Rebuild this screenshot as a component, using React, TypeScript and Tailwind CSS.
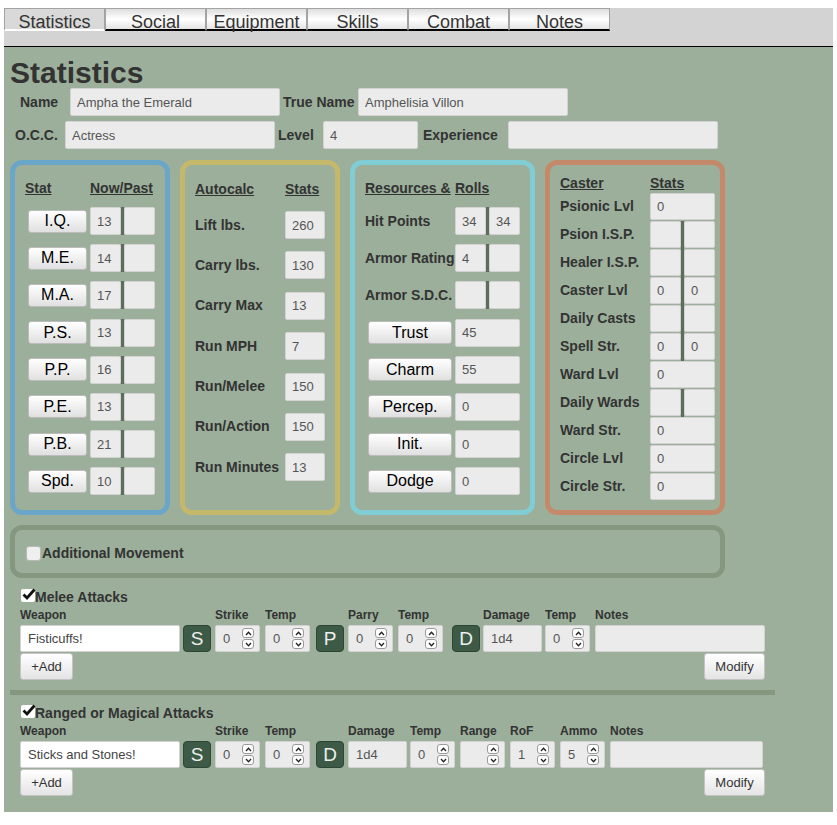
import React from 'react';

/**
 * Character sheet - Statistics tab
 */

const tabs = ['Statistics', 'Social', 'Equipment', 'Skills', 'Combat', 'Notes'];

function Field({ value = '', className = '' }: { value?: string; className?: string }) {
    return (
        <input
            readOnly
            value={value}
            className={`rounded-[2px] border border-[#d3d3d3] bg-[#ebebeb] px-[6px] text-[13px] text-[#555] outline-none ${className}`}
        />
    );
}

function Pair({ a = '', b = '', h = 'h-[28px]' }: { a?: string; b?: string; h?: string }) {
    return (
        <div className="flex items-start">
            <Field value={a} className={`w-[31px] ${h}`} />
            <div className="w-[3px] self-stretch bg-[#5d6c5c]" />
            <Field value={b} className={`w-[31px] ${h}`} />
        </div>
    );
}

function Btn({ children, className = '' }: { children: React.ReactNode; className?: string }) {
    return (
        <button className={`flex h-[23px] items-center justify-center rounded-[3px] border border-[#bcbcbc] bg-linear-to-b from-white to-[#e0e0e0] text-[16px] leading-none text-black ${className}`}>
            {children}
        </button>
    );
}

function Label({ children, className = '' }: { children: React.ReactNode; className?: string }) {
    return <span className={`shrink-0 text-[14px] font-bold text-[#333] ${className}`}>{children}</span>;
}

function Spin() {
    return (
        <div className="flex flex-col gap-[1px]">
            <span className="flex h-[10px] w-[12px] items-center justify-center rounded-[3px] border border-[#9a9a9a] bg-white">
                <svg width="7" height="5" viewBox="0 0 7 5"><path d="M1 4 L3.5 1.3 L6 4" fill="none" stroke="#222" strokeWidth="1.3" /></svg>
            </span>
            <span className="flex h-[10px] w-[12px] items-center justify-center rounded-[3px] border border-[#9a9a9a] bg-white">
                <svg width="7" height="5" viewBox="0 0 7 5"><path d="M1 1 L3.5 3.7 L6 1" fill="none" stroke="#222" strokeWidth="1.3" /></svg>
            </span>
        </div>
    );
}

function CheckBox({ checked }: { checked?: boolean }) {
    if (!checked) {
        return <span className="inline-block h-[15px] w-[15px] shrink-0 rounded-[3px] border border-[#b8b8b8] bg-[#efefef]" />;
    }
    return (
        <span className="relative inline-block h-[13px] w-[14px] shrink-0 rounded-[2px] bg-white">
            <svg className="absolute left-[1px] top-[-1px]" width="14" height="13" viewBox="0 0 14 13">
                <path d="M1.5 6.5 L5 10 L12.5 1.5" fill="none" stroke="#111" strokeWidth="2.8" />
            </svg>
        </span>
    );
}

type Col = { label?: string; cls: string; kind: 'text' | 'btn' | 'num'; value?: string; white?: boolean };

const melee: Col[] = [
    { label: 'Weapon', cls: 'w-[160px]', kind: 'text', value: 'Fisticuffs!', white: true },
    { cls: 'ml-[3px] w-[28px]', kind: 'btn', value: 'S' },
    { label: 'Strike', cls: 'ml-[4px] w-[45px]', kind: 'num', value: '0' },
    { label: 'Temp', cls: 'ml-[5px] w-[45px]', kind: 'num', value: '0' },
    { cls: 'ml-[6px] w-[28px]', kind: 'btn', value: 'P' },
    { label: 'Parry', cls: 'ml-[4px] w-[45px]', kind: 'num', value: '0' },
    { label: 'Temp', cls: 'ml-[5px] w-[45px]', kind: 'num', value: '0' },
    { cls: 'ml-[9px] w-[28px]', kind: 'btn', value: 'D' },
    { label: 'Damage', cls: 'ml-[3px] w-[59px]', kind: 'text', value: '1d4' },
    { label: 'Temp', cls: 'ml-[3px] w-[45px]', kind: 'num', value: '0' },
    { label: 'Notes', cls: 'ml-[5px] w-[170px]', kind: 'text' },
];

const ranged: Col[] = [
    { label: 'Weapon', cls: 'w-[160px]', kind: 'text', value: 'Sticks and Stones!', white: true },
    { cls: 'ml-[3px] w-[28px]', kind: 'btn', value: 'S' },
    { label: 'Strike', cls: 'ml-[4px] w-[45px]', kind: 'num', value: '0' },
    { label: 'Temp', cls: 'ml-[5px] w-[45px]', kind: 'num', value: '0' },
    { cls: 'ml-[6px] w-[28px]', kind: 'btn', value: 'D' },
    { label: 'Damage', cls: 'ml-[4px] w-[59px]', kind: 'text', value: '1d4' },
    { label: 'Temp', cls: 'ml-[3px] w-[45px]', kind: 'num', value: '0' },
    { label: 'Range', cls: 'ml-[5px] w-[45px]', kind: 'num', value: '' },
    { label: 'RoF', cls: 'ml-[5px] w-[45px]', kind: 'num', value: '1' },
    { label: 'Ammo', cls: 'ml-[5px] w-[45px]', kind: 'num', value: '5' },
    { label: 'Notes', cls: 'ml-[5px] w-[153px]', kind: 'text' },
];

function AttackCell({ col }: { col: Col }) {
    if (col.kind === 'btn') {
        return (
            <div className={`flex h-[27px] items-center justify-center rounded-[4px] border border-[#2f4637] bg-[#3c5a46] text-[19px] leading-none text-[#eee] ${col.cls}`}>
                {col.value}
            </div>
        );
    }
    if (col.kind === 'num') {
        return (
            <div className={`flex h-[27px] items-center justify-between rounded-[2px] border border-[#d3d3d3] bg-[#ebebeb] pl-[7px] pr-[5px] text-[13px] text-[#555] ${col.cls}`}>
                <span>{col.value}</span>
                <Spin />
            </div>
        );
    }
    return (
        <input
            readOnly
            value={col.value ?? ''}
            className={`h-[27px] rounded-[2px] border border-[#d3d3d3] px-[7px] text-[13px] outline-none ${col.white ? 'bg-white text-[#444]' : 'bg-[#ebebeb] text-[#555]'} ${col.cls}`}
        />
    );
}

function Attacks({ title, cols, top }: { title: string; cols: Col[]; top: string }) {
    return (
        <div className="pl-[10px]">
            <div className={`flex h-[16px] items-center ${top}`}>
                <span className="ml-[1px]"><CheckBox checked /></span>
                <span className="text-[14px] font-bold text-[#333]">{title}</span>
            </div>
            <div className="mt-[3px] flex h-[14px] items-center text-[12px] font-bold text-[#333]">
                {cols.map((c, i) => (
                    <div key={i} className={`shrink-0 ${c.cls}`}>{c.label}</div>
                ))}
            </div>
            <div className="mt-[3px] flex items-center">
                {cols.map((c, i) => (
                    <AttackCell key={i} col={c} />
                ))}
            </div>
            <div className="mt-[1px] flex w-[745px] justify-between">
                <button className="h-[27px] w-[53px] rounded-[3px] border border-[#c4c4c4] bg-linear-to-b from-white to-[#e4e4e4] text-[13px] text-[#333]">+Add</button>
                <button className="h-[27px] w-[61px] rounded-[3px] border border-[#c4c4c4] bg-linear-to-b from-white to-[#e4e4e4] text-[13px] text-[#333]">Modify</button>
            </div>
        </div>
    );
}

const stats = [
    ['I.Q.', '13'],
    ['M.E.', '14'],
    ['M.A.', '17'],
    ['P.S.', '13'],
    ['P.P.', '16'],
    ['P.E.', '13'],
    ['P.B.', '21'],
    ['Spd.', '10'],
];

const autocalc = [
    ['Lift lbs.', '260'],
    ['Carry lbs.', '130'],
    ['Carry Max', '13'],
    ['Run MPH', '7'],
    ['Run/Melee', '150'],
    ['Run/Action', '150'],
    ['Run Minutes', '13'],
];

const rollButtons = [
    ['Trust', '45'],
    ['Charm', '55'],
    ['Percep.', '0'],
    ['Init.', '0'],
    ['Dodge', '0'],
];

// split = two boxes with a divider, otherwise a single box
const caster: { label: string; split: boolean; a?: string; b?: string }[] = [
    { label: 'Psionic Lvl', split: false, a: '0' },
    { label: 'Psion I.S.P.', split: true },
    { label: 'Healer I.S.P.', split: true },
    { label: 'Caster Lvl', split: true, a: '0', b: '0' },
    { label: 'Daily Casts', split: true },
    { label: 'Spell Str.', split: true, a: '0', b: '0' },
    { label: 'Ward Lvl', split: false, a: '0' },
    { label: 'Daily Wards', split: true },
    { label: 'Ward Str.', split: false, a: '0' },
    { label: 'Circle Lvl', split: false, a: '0' },
    { label: 'Circle Str.', split: false, a: '0' },
];

export default function App() {
    return (
        <div className="min-h-screen bg-white px-1 pt-2 font-['Liberation_Sans',Arial,sans-serif]">
            {/* Tab bar */}
            <div className="flex h-[39px] items-start border-b border-black bg-[#d3d3d3]">
                {tabs.map((t, i) => (
                    <div
                        key={t}
                        className={
                            i === 0
                                ? 'flex h-[23px] w-[101px] items-center justify-center border-x border-t border-[#a3a3a3] border-b-2 border-b-white bg-[#d9d9d9] pt-[5px] text-[18px] leading-[20px] text-[#333]'
                                : 'flex h-[23px] w-[101px] items-center justify-center border-x border-t border-[#a3a3a3] border-b-2 border-b-black bg-linear-to-b from-[#dedede] via-white to-[#e4e4e4] pt-[5px] text-[18px] leading-[20px] text-[#333]'
                        }
                    >
                        {t}
                    </div>
                ))}
            </div>

            {/* Sheet body */}
            <div className="bg-[#9caf9b] px-[6px] pb-[16px]">
                <h1 className="pt-[11px] text-[30px] font-bold leading-[30px] text-[#333]">Statistics</h1>

                <div className="flex h-[28px] items-center">
                    <Label className="ml-[10px] w-[50px]">Name</Label>
                    <Field value="Ampha the Emerald" className="h-[28px] w-[210px]" />
                    <Label className="ml-[3px] w-[75px]">True Name</Label>
                    <Field value="Amphelisia Villon" className="h-[28px] w-[210px]" />
                </div>
                <div className="mt-[5px] flex h-[28px] items-center">
                    <Label className="ml-[5px] w-[50px]">O.C.C.</Label>
                    <Field value="Actress" className="h-[28px] w-[210px]" />
                    <Label className="ml-[3px] w-[45px]">Level</Label>
                    <Field value="4" className="h-[28px] w-[95px]" />
                    <Label className="ml-[5px] w-[85px]">Experience</Label>
                    <Field className="h-[28px] w-[210px]" />
                </div>

                {/* Stat boxes */}
                <div className="mt-[11px] flex gap-[10px]">
                    <div className="h-[355px] w-[160px] rounded-[12px] border-[5px] border-[#6aa6c8] pl-[10px] pt-[15px]">
                        <div className="flex text-[14px] font-bold leading-[16px] text-[#333]">
                            <span className="w-[65px]"><span className="underline">Stat</span></span>
                            <span className="underline">Now/Past</span>
                        </div>
                        <div className="mt-[11px] flex flex-col gap-[9.2px]">
                            {stats.map(([s, v]) => (
                                <div key={s} className="flex h-[28px] items-center">
                                    <Btn className="ml-[3px] w-[59px]">{s}</Btn>
                                    <div className="ml-[3px]"><Pair a={v} /></div>
                                </div>
                            ))}
                        </div>
                    </div>

                    <div className="h-[355px] w-[160px] rounded-[12px] border-[5px] border-[#c4b96a] pl-[10px] pt-[16px]">
                        <div className="flex text-[14px] font-bold leading-[16px] text-[#333]">
                            <span className="w-[90px]"><span className="underline">Autocalc</span></span>
                            <span className="underline">Stats</span>
                        </div>
                        <div className="mt-[14px] flex flex-col gap-[12.4px]">
                            {autocalc.map(([l, v]) => (
                                <div key={l} className="flex h-[28px] items-center">
                                    <Label className="w-[90px]">{l}</Label>
                                    <Field value={v} className="h-[28px] w-[40px]" />
                                </div>
                            ))}
                        </div>
                    </div>

                    <div className="h-[355px] w-[185px] rounded-[12px] border-[5px] border-[#80cdd5] pl-[10px] pt-[15px]">
                        <div className="flex text-[14px] font-bold leading-[16px] text-[#333]">
                            <span className="w-[90px]"><span className="underline">Resources &amp;</span></span>
                            <span className="underline">Rolls</span>
                        </div>
                        <div className="mt-[11px] flex flex-col gap-[9.2px]">
                            <div className="flex h-[28px] items-center">
                                <Label className="w-[90px]">Hit Points</Label>
                                <Pair a="34" b="34" />
                            </div>
                            <div className="flex h-[28px] items-center">
                                <Label className="w-[90px]">Armor Rating</Label>
                                <Pair a="4" />
                            </div>
                            <div className="flex h-[28px] items-center">
                                <Label className="w-[90px]">Armor S.D.C.</Label>
                                <Pair />
                            </div>
                            {rollButtons.map(([l, v]) => (
                                <div key={l} className="flex h-[28px] items-center">
                                    <Btn className="ml-[3px] w-[84px]">{l}</Btn>
                                    <Field value={v} className="ml-[3px] h-[28px] w-[65px]" />
                                </div>
                            ))}
                        </div>
                    </div>

                    <div className="h-[355px] w-[180px] rounded-[12px] border-[5px] border-[#c48968] pl-[10px] pt-[10px]">
                        <div className="flex text-[14px] font-bold leading-[16px] text-[#333]">
                            <span className="w-[90px]"><span className="underline">Caster</span></span>
                            <span className="underline">Stats</span>
                        </div>
                        <div className="mt-[2px] flex flex-col">
                            {caster.map((c) => (
                                <div key={c.label} className="flex h-[28px] items-start">
                                    <Label className="w-[90px] leading-[27px]">{c.label}</Label>
                                    {c.split ? (
                                        <div className="flex h-[28px] items-start">
                                            <Field value={c.a ?? ''} className="h-[27px] w-[31px]" />
                                            <div className="h-[28px] w-[3px] bg-[#5d6c5c]" />
                                            <Field value={c.b ?? ''} className="h-[27px] w-[31px]" />
                                        </div>
                                    ) : (
                                        <Field value={c.a ?? ''} className="h-[27px] w-[65px]" />
                                    )}
                                </div>
                            ))}
                        </div>
                    </div>
                </div>

                {/* Additional movement */}
                <div className="mt-[10px] flex h-[53px] w-[715px] items-center gap-[1px] rounded-[12px] border-[5px] border-[#85977f] pl-[11px] pt-[3px]">
                    <CheckBox />
                    <span className="text-[14px] font-bold text-[#333]">Additional Movement</span>
                </div>

                <Attacks title="Melee Attacks" cols={melee} top="mt-[11px]" />

                <div className="mt-[10px] h-[5px] w-[765px] bg-[#85977f]" />

                <Attacks title="Ranged or Magical Attacks" cols={ranged} top="mt-[10px]" />
            </div>
        </div>
    );
}
